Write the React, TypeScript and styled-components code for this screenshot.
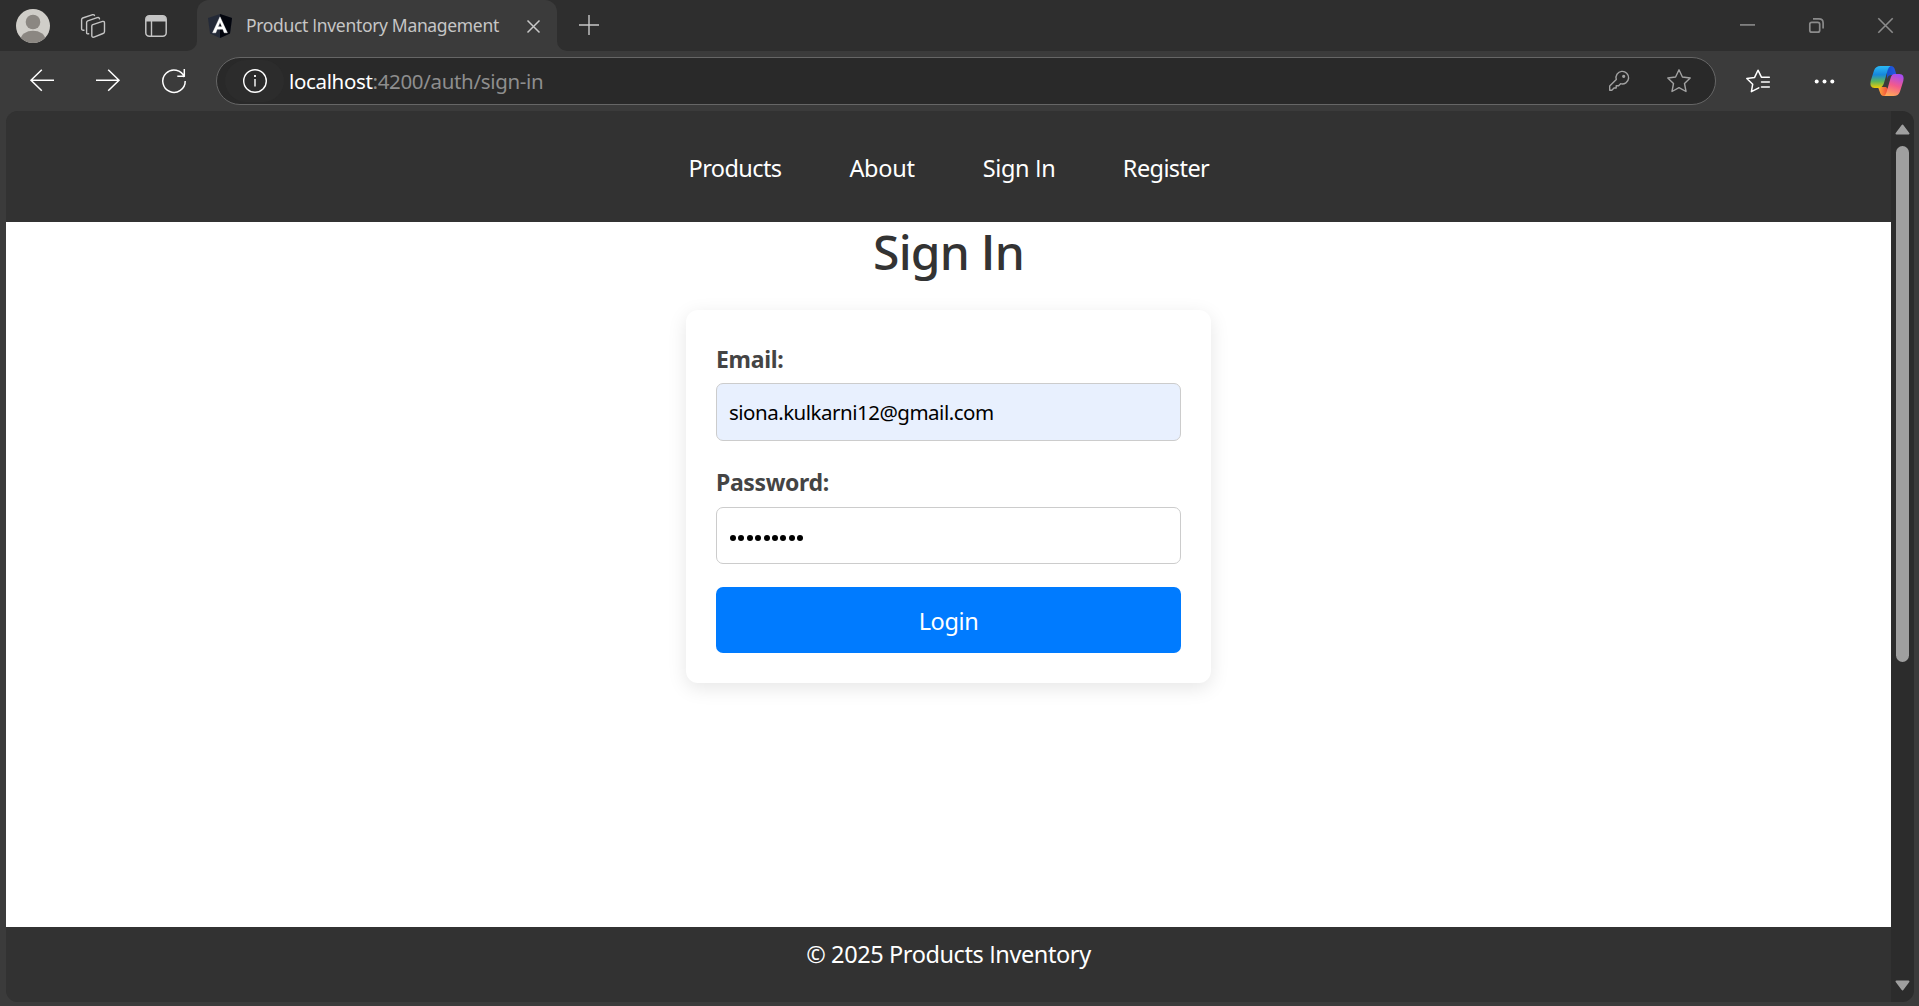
import React from 'react';
import styled, { createGlobalStyle } from 'styled-components';

const font = '"Noto Sans", "Open Sans", sans-serif';

const GlobalStyle = createGlobalStyle`
  * { box-sizing: border-box; }
  body { margin: 0; background: #3b3b3b; font-family: ${font}; overflow: hidden; }
`;

const Window = styled.div`
  width: 100vw;
  height: 100vh;
  display: flex;
  flex-direction: column;
  background: #3b3b3b;
  overflow: hidden;
`;

const Text = styled.span<{ $size: number; $spacing?: number; $weight?: number; $color?: string }>`
  font-size: ${p => p.$size}px;
  letter-spacing: ${p => p.$spacing ?? 0}px;
  font-weight: ${p => p.$weight ?? 400};
  color: ${p => p.$color ?? 'inherit'};
  white-space: nowrap;
`;

/* A capital I without the crossbars that Noto Sans gives it. */
const PlainI = styled.span<{ $weight?: number }>`
  font-family: "Open Sans", sans-serif;
  font-weight: ${p => p.$weight ?? 'inherit'};
  line-height: 1;
`;

/* ---- Tab strip ---- */
const TabStrip = styled.div`
  height: 51px;
  flex: none;
  display: flex;
  background: #3b3b3b;
`;

const StripLeft = styled.div`
  width: 197px;
  display: flex;
  align-items: center;
  padding: 1px 0 0 16px;
  background: #2e2e2e;
  border-bottom-right-radius: 10px;
`;

const Tab = styled.div`
  width: 360px;
  background: #2e2e2e;
`;

const TabFace = styled.div`
  height: 51px;
  display: flex;
  align-items: center;
  padding: 1px 0 0 11px;
  background: #3b3b3b;
  border-radius: 12px 12px 0 0;
`;

const TabTitle = styled.div`
  width: 281px;
  margin: 0 0 2px 14px;
  line-height: 24px;
  color: #c6c6c6;
`;

const StripRight = styled.div`
  flex: 1;
  display: flex;
  align-items: center;
  padding: 0 26px 0 22px;
  background: #2e2e2e;
  border-bottom-left-radius: 10px;
`;

const WindowControls = styled.div`
  margin-left: auto;
  display: flex;
  align-items: center;
  gap: 54px;
`;

const Icon = styled.svg<{ $ml?: number }>`
  display: block;
  flex: none;
  margin-left: ${p => p.$ml ?? 0}px;
  overflow: visible;
`;

/* ---- Toolbar ---- */
const Toolbar = styled.div`
  height: 60px;
  flex: none;
  display: flex;
  align-items: center;
  padding: 0 15px 0 30px;
`;

const AddressBar = styled.div`
  width: 1500px;
  height: 48px;
  margin: 0 0 0 30px;
  padding: 0 24px 0 8px;
  display: flex;
  align-items: center;
  border: 1.5px solid #666;
  border-radius: 24px;
  background: #292929;
`;

const SiteInfo = styled.div`
  width: 59px;
  height: 42px;
  border-radius: 21px;
  background: #2c2c2c;
  display: flex;
  align-items: center;
  justify-content: center;
`;

const Url = styled.div`
  margin: 2px 0 0 5px;
  color: #8e8e8e;
  line-height: 30px;
  white-space: nowrap;
`;

const AddressActions = styled.div`
  margin-left: auto;
  display: flex;
  align-items: center;
  gap: 38px;
`;

/* ---- Web page ---- */
const Viewport = styled.div`
  height: 891px;
  flex: none;
  margin: 0 5px 0 6px;
  display: flex;
  border-radius: 12px;
  overflow: hidden;
  background: #323232;
`;

const Page = styled.div`
  width: 1885px;
  display: flex;
  flex-direction: column;
`;

const Header = styled.nav`
  height: 111px;
  flex: none;
  display: flex;
  justify-content: center;
  align-items: center;
  gap: 67px;
  padding-top: 2px;
  background: #323232;
`;

const NavLink = styled.a<{ $w: number }>`
  width: ${p => p.$w}px;
  display: flex;
  justify-content: center;
  color: #fff;
`;

const Main = styled.main`
  height: 705px;
  flex: none;
  display: flex;
  flex-direction: column;
  align-items: center;
  background: #fff;
`;

const Title = styled.h1`
  margin: 0;
  height: 88px;
  padding-top: 2px;
  line-height: 56px;
  font-weight: 500;
  color: #333;
`;

const Card = styled.form`
  width: 525px;
  height: 373px;
  padding: 30px;
  display: flex;
  flex-direction: column;
  border-radius: 12px;
  background: #fff;
  box-shadow: 0 5px 19px rgba(0, 0, 0, 0.1);
`;

const Field = styled.div<{ $gap: number }>`
  display: flex;
  flex-direction: column;
  margin-bottom: ${p => p.$gap}px;
`;

const Label = styled.label<{ $h: number }>`
  height: ${p => p.$h}px;
  line-height: 39px;
  color: #444;
`;

const Input = styled.div<{ $filled?: boolean }>`
  height: ${p => (p.$filled ? 58 : 57)}px;
  padding: 0 12px;
  display: flex;
  align-items: center;
  border: 1px solid #ccc;
  border-radius: 7px;
  background: ${p => (p.$filled ? '#e8f0fe' : '#fff')};
  color: #000;
`;

const Dots = styled.div`
  display: flex;
  gap: 2.4px;
  padding: 5px 0 0 1px;
`;

const Dot = styled.span`
  width: 6px;
  height: 6px;
  border-radius: 50%;
  background: #000;
`;

const LoginButton = styled.button`
  height: 66px;
  padding: 2px 0 0;
  border: 0;
  border-radius: 7px;
  background: #007bff;
  color: #fff;
  font-family: inherit;
`;

const Footer = styled.footer`
  flex: 1;
  display: flex;
  justify-content: center;
  padding-top: 9px;
  line-height: 36px;
  color: #fff;
  background: #323232;
`;

const ScrollTrack = styled.div`
  flex: 1;
  display: flex;
  flex-direction: column;
  align-items: center;
  padding: 13px 0 11px 0;
  background: #2c2c2c;
`;

const ScrollThumb = styled.div`
  width: 13px;
  height: 516px;
  margin: 11px 0 auto;
  border-radius: 7px;
  background: #9f9f9f;
`;

export default function App() {
  return (
    <>
      <GlobalStyle />
      <Window>
        <TabStrip>
          <StripLeft>
            <Icon width="34" height="34" viewBox="0 0 34 34">
              <clipPath id="avatar"><circle cx="17" cy="17" r="17" /></clipPath>
              <g clipPath="url(#avatar)">
                <rect width="34" height="34" fill="#d0cec9" />
                <circle cx="17" cy="13" r="7.3" fill="#8b8782" />
                <ellipse cx="17" cy="30" rx="12.2" ry="8.2" fill="#8b8782" />
              </g>
            </Icon>
            <Icon $ml={31} width="24" height="24" viewBox="0 0 24 24" fill="none" stroke="#c4c4c4" strokeWidth="1.4" strokeLinejoin="round" strokeLinecap="round">
              <path d="M11.8 10.6 21.6 7.4Q23.5 7 23.5 9V17.4Q23.5 18.9 22 19.5L13 23.1Q10.8 23.7 10.8 21.6V12.1Q10.8 11 11.8 10.6Z" />
              <path d="M7.7 19.8Q5.6 20.3 5.6 18.4V8.5Q5.6 7.3 6.7 6.8L16.2 3.6Q18.2 3.1 18.5 4.8" />
              <path d="M3 16.2Q.6 16.6.6 14.6V5.7Q.6 4.5 1.7 4L11 .8Q13 .3 13.5 1.4" />
            </Icon>
            <Icon $ml={40} width="22" height="22" viewBox="0 0 22 22">
              <rect x=".8" y=".8" width="20.4" height="20.4" rx="3.5" fill="none" stroke="#c4c4c4" strokeWidth="1.5" />
              <path d="M1 6.5V4Q1 1 4 1H18Q21 1 21 4V6.5Z" fill="#c4c4c4" />
              <path d="M6.5 6V21" stroke="#c4c4c4" strokeWidth="1.4" />
            </Icon>
          </StripLeft>
          <Tab>
            <TabFace>
              <Icon width="24" height="24" viewBox="0 0 24 24">
                <path d="M12 0 24 4 22 19.5 12 24 2 19.5 0 4Z" fill="#242a38" />
                <path d="M12 0 24 4 22 19.5 12 24Z" fill="#03050d" />
                <path d="M12 2.8 19.4 18.8H16.2L14.8 15.200H9.200L7.800 18.8H4.600ZM12 8.200 10.100 12.700H13.900Z" fill="#fff" stroke="#fff" strokeWidth=".4" fillRule="evenodd" />
              </Icon>
              <TabTitle><Text $size={17.5} $spacing={-0.33}>Product <PlainI>I</PlainI>nventory Management</Text></TabTitle>
              <Icon width="13" height="13" viewBox="0 0 13 13" stroke="#c8c8c8" strokeWidth="1.5"><path d="M.5.5 12.500 12.500M12.500.5.5 12.500" /></Icon>
            </TabFace>
          </Tab>
          <StripRight>
            <Icon width="20" height="20" viewBox="0 0 20 20" stroke="#c8c8c8" strokeWidth="1.4"><path d="M0 9H20M10-1V19" /></Icon>
            <WindowControls>
              <Icon width="15" height="15" viewBox="0 0 15 15" stroke="#8b8b8b" strokeWidth="1.6"><path d="M0 6.900H15" /></Icon>
              <Icon width="15" height="15" viewBox="0 0 15 15" fill="none" stroke="#8b8b8b" strokeWidth="1.7">
                <rect x=".8" y="4.300" width="9.900" height="9.900" rx="2" />
                <path d="M4 .9H10Q14.100.9 14.100 5V10.600" />
              </Icon>
              <Icon width="15" height="15" viewBox="0 0 15 15" stroke="#8b8b8b" strokeWidth="1.6"><path d="M.3.3 14.700 14.700M14.700.3.3 14.700" /></Icon>
            </WindowControls>
          </StripRight>
        </TabStrip>

        <Toolbar>
          <Icon width="24" height="24" viewBox="0 0 24 24" fill="none" stroke="#fff" strokeWidth="1.5"><path d="M24 11.300H1M11.800.8 1 11.300 11.800 21.800" /></Icon>
          <Icon $ml={42} width="24" height="24" viewBox="0 0 24 24" fill="none" stroke="#fff" strokeWidth="1.500"><path d="M0 11.300H23M12.200.8 23 11.300 12.200 21.800" /></Icon>
          <Icon $ml={42} width="24" height="24" viewBox="0 0 24 24" fill="none" stroke="#fff" strokeWidth="1.500">
            <path d="M22.400 8A11.200 11.200 0 1 0 23.200 12M22.400 8A11.200 11.200 0 0 0 21.300 6.500M22.300 0V7.200H15.300" />
          </Icon>
          <AddressBar>
            <SiteInfo>
              <Icon width="24" height="24" viewBox="0 0 24 24" fill="none" stroke="#fff" strokeWidth="1.400">
                <circle cx="12" cy="12" r="11.300" /><path d="M12 10V17.500" /><path d="M12 6V8" strokeWidth="1.800" />
              </Icon>
            </SiteInfo>
            <Url>
              <Text $size={20.5} $spacing={-0.34} $color="#fff">localhost</Text>
              <Text $size={20.5} $spacing={-0.34}>:4200/auth/sign-in</Text>
            </Url>
            <AddressActions>
              <Icon width="20" height="20" viewBox="0 0 20 20" fill="none" stroke="#a2a2a2" strokeWidth="1.400" strokeLinejoin="round">
                <path d="M7.300 8.500A6.300 6.300 0 1 1 11.600 12.700L9.600 14.700H7.200V17H5L2.800 19.300H.7V15.100Z" />
                <circle cx="14.700" cy="5.300" r=".9" fill="#a2a2a2" />
              </Icon>
              <Icon width="24" height="24" viewBox="0 0 24 24" fill="none" stroke="#a2a2a2" strokeWidth="1.400" strokeLinejoin="round">
                <path d="M12 .8 15.400 8 23.200 9 17.500 14.500 19 22.500 12 18.700 5 22.500 6.500 14.500.8 9 8.600 8Z" />
              </Icon>
            </AddressActions>
          </AddressBar>
          <Icon $ml={30} width="24" height="24" viewBox="0 0 24 24" fill="none" stroke="#fff" strokeWidth="1.500" strokeLinejoin="round" strokeLinecap="round">
            <path d="M12.800 18.900 5.400 22.700 6.700 15.200.8 9.500 8.600 8.400 12 1.200 15.400 8.200H23.300M15.500 13H23.300M15.500 18H23.300" />
          </Icon>
          <Icon $ml={44} width="22" height="24" viewBox="0 0 22 24" fill="#fff">
            <circle cx="2.700" cy="12.500" r="2" /><circle cx="10.500" cy="12.500" r="2" /><circle cx="18.300" cy="12.500" r="2" />
          </Icon>
          <Icon $ml={34} width="34" height="32" viewBox="0 0 34 32">
            <defs>
              <linearGradient id="cpBlue" x1="0" y1="0" x2="0" y2="1"><stop offset="0" stopColor="#2bb9f5" /><stop offset=".4" stopColor="#1687dc" /><stop offset=".7" stopColor="#5cb55c" /><stop offset="1" stopColor="#f3cc04" /></linearGradient>
              <linearGradient id="cpPink" x1=".6" y1="0" x2=".3" y2="1"><stop offset="0" stopColor="#a64cf0" /><stop offset=".5" stopColor="#f35a8c" /><stop offset="1" stopColor="#ffaa58" /></linearGradient>
              <linearGradient id="cpNavy" x1="0" y1="0" x2="1" y2="0"><stop offset="0" stopColor="#174fc9" /><stop offset="1" stopColor="#255ae6" /></linearGradient>
              <linearGradient id="cpOrange" x1="0" y1="0" x2="1" y2="0"><stop offset="0" stopColor="#ffb13d" /><stop offset="1" stopColor="#ef3c3a" /></linearGradient>
            </defs>
            <path d="M17 1H21Q24 1 25 5L26.500 10H21.500Q18 10 17 14Z" fill="url(#cpNavy)" />
            <path d="M8 22H16L19 25 17 31H13.500Q11 31 9.800 27Z" fill="url(#cpOrange)" />
            <path d="M10.500 1H20.500Q18.600 2 17.700 5L14 18Q12.500 23 8.500 23H4.500Q-.8 23 .7 16L4 5.500Q5.500 1 10.500 1Z" fill="url(#cpBlue)" />
            <path d="M24.500 9H29.500Q34.800 9 33.300 16L30 26.500Q28.500 31 23.500 31H14Q15.700 30 16.600 27L20.300 14Q21.500 9 24.500 9Z" fill="url(#cpPink)" />
          </Icon>
        </Toolbar>

        <Viewport>
          <Page>
            <Header>
              <NavLink $w={94}><Text $size={23.5} $spacing={-0.6}>Products</Text></NavLink>
              <NavLink $w={66}><Text $size={23.5} $spacing={-0.3}>About</Text></NavLink>
              <NavLink $w={74}><Text $size={23.5} $spacing={-0.35}>Sign <PlainI>I</PlainI>n</Text></NavLink>
              <NavLink $w={86}><Text $size={23.5} $spacing={-0.6}>Register</Text></NavLink>
            </Header>
            <Main>
              <Title><Text $size={48} $weight={500} $spacing={-0.8}>Sign <PlainI $weight={600}>I</PlainI>n</Text></Title>
              <Card>
                <Field $gap={22}>
                  <Label $h={43}><Text $size={23} $weight={700} $spacing={-0.3}>Email:</Text></Label>
                  <Input $filled><Text $size={20.5} $spacing={-0.5}>siona.kulkarni12@gmail.com</Text></Input>
                </Field>
                <Field $gap={23}>
                  <Label $h={44}><Text $size={23} $weight={700} $spacing={-0.35}>Password:</Text></Label>
                  <Input>
                    <Dots>{Array.from({ length: 9 }, (_, i) => <Dot key={i} />)}</Dots>
                  </Input>
                </Field>
                <LoginButton type="button"><Text $size={23.5} $spacing={-0.4}>Login</Text></LoginButton>
              </Card>
            </Main>
            <Footer><Text $size={23.5} $spacing={-0.4}>© 2025 Products <PlainI>I</PlainI>nventory</Text></Footer>
          </Page>
          <ScrollTrack>
            <Icon width="15" height="11" viewBox="0 0 15 11"><path d="M7.500 1.500 13.500 9.500H1.500Z" fill="#9f9f9f" stroke="#9f9f9f" strokeWidth="2" strokeLinejoin="round" /></Icon>
            <ScrollThumb />
            <Icon width="15" height="11" viewBox="0 0 15 11"><path d="M7.500 9.500 13.500 1.500H1.500Z" fill="#9f9f9f" stroke="#9f9f9f" strokeWidth="2" strokeLinejoin="round" /></Icon>
          </ScrollTrack>
        </Viewport>
      </Window>
    </>
  );
}
